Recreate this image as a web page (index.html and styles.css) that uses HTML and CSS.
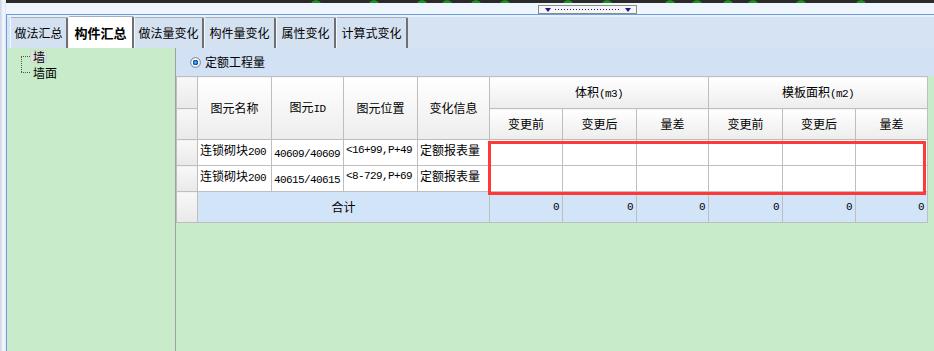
FILE: index.html
```html
<!DOCTYPE html>
<html lang="zh">
<head>
<meta charset="utf-8">
<title>构件汇总</title>
<link rel="stylesheet" href="styles.css">
</head>
<body>
<div class="app">
  <div class="edge"></div>
  <div class="main">
    <div class="topband"></div>
    <div class="splitter">
      <div class="grip"><span class="tri"></span><span class="dots"></span><span class="tri"></span></div>
    </div>
    <div class="frame">
      <div class="tabs">
        <div class="tab w1">做法汇总</div>
        <div class="tab active w2">构件汇总</div>
        <div class="tab w3">做法量变化</div>
        <div class="tab w4">构件量变化</div>
        <div class="tab w5">属性变化</div>
        <div class="tab w6">计算式变化</div>
      </div>
      <div class="content">
        <div class="left">
          <div class="tree">
            <div class="node sel"><span>墙</span></div>
            <div class="node"><span>墙面</span></div>
          </div>
        </div>
        <div class="right">
          <div class="radiobar"><span class="radio"></span><span>定额工程量</span></div>
          <div class="tablewrap">
            <table class="grid">
              <colgroup>
                <col class="c0"><col class="c74"><col class="c72"><col class="c74"><col class="c72">
                <col class="c73"><col class="c74"><col class="c72"><col class="c74"><col class="c73"><col class="c72">
              </colgroup>
              <thead>
                <tr class="h1">
                  <th class="rh"></th>
                  <th rowspan="2">图元名称</th>
                  <th rowspan="2">图元<span class="n">ID</span></th>
                  <th rowspan="2">图元位置</th>
                  <th rowspan="2">变化信息</th>
                  <th colspan="3">体积<span class="n">(m3)</span></th>
                  <th colspan="3">模板面积<span class="n">(m2)</span></th>
                </tr>
                <tr class="h2">
                  <th class="rh"></th>
                  <th>变更前</th><th>变更后</th><th>量差</th>
                  <th>变更前</th><th>变更后</th><th>量差</th>
                </tr>
              </thead>
              <tbody>
                <tr class="r">
                  <th class="rh"></th>
                  <td class="top">连锁砌块<span class="n">200</span></td>
                  <td class="mid n">40609/40609</td>
                  <td class="top n">&lt;16+99,P+49</td>
                  <td class="top">定额报表量</td>
                  <td></td><td></td><td></td><td></td><td></td><td></td>
                </tr>
                <tr class="r">
                  <th class="rh"></th>
                  <td class="top">连锁砌块<span class="n">200</span></td>
                  <td class="mid n">40615/40615</td>
                  <td class="top n">&lt;8-729,P+69</td>
                  <td class="top">定额报表量</td>
                  <td></td><td></td><td></td><td></td><td></td><td></td>
                </tr>
                <tr class="total">
                  <th class="rh"></th>
                  <td colspan="4" class="sum">合计</td>
                  <td class="num n">0</td><td class="num n">0</td><td class="num n">0</td>
                  <td class="num n">0</td><td class="num n">0</td><td class="num n">0</td>
                </tr>
              </tbody>
            </table>
            <div class="highlight"></div>
          </div>
        </div>
      </div>
    </div>
  </div>
</div>
</body>
</html>
```

FILE: styles.css
```css
html, body {
  margin: 0;
  padding: 0;
}
body {
  width: 934px;
  height: 351px;
  overflow: hidden;
  font-family: "Noto Sans CJK SC", "Liberation Sans", sans-serif;
  font-size: 12px;
  line-height: 14px;
  color: #000;
  background: #c8ecca;
}
.app {
  display: flex;
  height: 351px;
}
.edge {
  width: 6px;
  flex: none;
  background: linear-gradient(to right, #c8d3e3, #f6f9fd 55%, #dce6f3);
}
.main {
  flex: 1;
  min-width: 0;
  display: flex;
  flex-direction: column;
}
.topband {
  height: 3px;
  background-color: #2b2b2b;
  background-image:
    radial-gradient(5px 3px at 310px 3px, #1f8f1f 80%, transparent 100%),
    radial-gradient(5px 3px at 368px 3px, #1f8f1f 80%, transparent 100%),
    radial-gradient(5px 3px at 416px 3px, #1f8f1f 80%, transparent 100%),
    radial-gradient(5px 3px at 441px 3px, #1f8f1f 80%, transparent 100%),
    radial-gradient(5px 3px at 470px 3px, #1f8f1f 80%, transparent 100%),
    radial-gradient(5px 3px at 499px 3px, #1f8f1f 80%, transparent 100%),
    radial-gradient(5px 3px at 562px 3px, #1f8f1f 80%, transparent 100%),
    radial-gradient(5px 3px at 601px 3px, #1f8f1f 80%, transparent 100%),
    radial-gradient(5px 3px at 664px 3px, #1f8f1f 80%, transparent 100%),
    radial-gradient(5px 3px at 691px 3px, #1f8f1f 80%, transparent 100%),
    radial-gradient(5px 3px at 722px 3px, #1f8f1f 80%, transparent 100%),
    radial-gradient(5px 3px at 747px 3px, #1f8f1f 80%, transparent 100%),
    radial-gradient(5px 3px at 795px 3px, #1f8f1f 80%, transparent 100%),
    radial-gradient(5px 3px at 855px 3px, #1f8f1f 80%, transparent 100%);
}
.splitter {
  height: 11px;
  box-sizing: border-box;
  background: #eef5fd;
  padding: 2px 0 0 532px;
  display: flex;
  align-items: flex-start;
}
.grip {
  width: 99px;
  height: 9px;
  box-sizing: border-box;
  border: 1px solid #8c8c8c;
  background: #f6f6f6;
  display: flex;
  align-items: center;
  padding: 0 5px 0 6px;
  gap: 4px;
}
.tri {
  width: 0;
  height: 0;
  border-left: 3px solid transparent;
  border-right: 3px solid transparent;
  border-top: 4px solid #17178a;
}
.dots {
  flex: 1;
  height: 1px;
  background: repeating-linear-gradient(to right, #17178a 0 1px, transparent 1px 3px);
}
.frame {
  flex: 1;
  min-height: 0;
  display: flex;
  flex-direction: column;
  border-top: 1px solid #6c9ce2;
  border-left: 1px solid #6c9ce2;
}
.tabs {
  height: 33px;
  flex: none;
  box-sizing: border-box;
  background: linear-gradient(#e8f0fa 0 2px, #d6e3f3 2px);
  display: flex;
  align-items: flex-end;
  padding-left: 3px;
}
.tab {
  height: 31px;
  box-sizing: border-box;
  display: flex;
  align-items: center;
  justify-content: center;
  background: #d3e1f1;
  border-top: 1px solid #a4afbd;
  border-left: 1px solid #f4f8fc;
  border-right: 2px solid #707070;
  border-radius: 2px 2px 0 0;
  white-space: nowrap;
}
.tab.active {
  height: 32px;
  background: #ffffff;
  font-weight: bold;
  font-size: 13px;
}
.w1 { width: 58px; }
.w2 { width: 66px; }
.w3 { width: 70px; }
.w4 { width: 72px; }
.w5 { width: 60px; }
.w6 { width: 72px; }
.content {
  flex: 1;
  min-height: 0;
  display: flex;
}
.left {
  width: 168px;
  flex: none;
  background: #c8ecca;
  border-right: 1px solid #a0a0a0;
}
.tree {
  position: relative;
  margin: 0 0 0 14px;
}
.tree::before {
  content: "";
  position: absolute;
  left: 0;
  top: 8px;
  height: 16px;
  border-left: 1px dotted #555;
}
.node {
  display: flex;
  align-items: center;
  height: 16px;
  line-height: 13px;
}
.node::before {
  content: "";
  width: 9px;
  border-top: 1px dotted #555;
}
.node span {
  padding: 0 2px 0 3px;
  border-radius: 2px;
}
.node.sel span {
  background: #dde3dd;
  box-shadow: inset 0 0 0 1px #cdd5cd;
}
.right {
  flex: 1;
  min-width: 0;
  display: flex;
  flex-direction: column;
  background: #c8ecca;
}
.radiobar {
  height: 28px;
  flex: none;
  background: #d2e2f4;
  display: flex;
  align-items: center;
  padding-left: 14px;
  gap: 4px;
}
.radio {
  width: 11px;
  height: 11px;
  box-sizing: border-box;
  border-radius: 50%;
  border: 1px solid #8593a3;
  background: radial-gradient(circle, #5cc0f4 0, #0c72cc 1.8px, #0a3d86 2.6px, #ffffff 3px, #f2f5f8 3.6px, #c4ccd6 4.5px);
}
.tablewrap {
  position: relative;
  align-self: flex-start;
}
.grid {
  border-collapse: collapse;
  table-layout: fixed;
  width: 751px;
}
.c0 { width: 21px; }
.c72 { width: 72px; }
.c73 { width: 73px; }
.c74 { width: 74px; }
.grid th, .grid td {
  border: 1px solid #bebebe;
  padding: 0;
  white-space: nowrap;
  overflow: hidden;
}
.grid thead th {
  font-weight: normal;
  text-align: center;
  vertical-align: middle;
  background: linear-gradient(#ffffff, #ededed);
}
.grid th.rh {
  background: linear-gradient(#f8f8f8, #e9e9e9);
}
.h1 { height: 32px; }
.h2 { height: 31px; }
.r { height: 26px; }
.total { height: 31px; }
.grid td {
  background: #ffffff;
}
.grid td.top {
  vertical-align: top;
  padding: 3px 0 0 2px;
}
.grid td.mid {
  vertical-align: middle;
  padding: 2px 0 0 2px;
}
.total td {
  background: #d2e4f8;
}
.grid td.sum {
  text-align: center;
  vertical-align: middle;
  background: #d2e4f8;
}
.grid td.num {
  text-align: right;
  vertical-align: middle;
  padding-right: 3px;
}
.n {
  font-family: "Liberation Mono", monospace;
  font-size: 11px;
  letter-spacing: -0.6px;
}
.highlight {
  position: absolute;
  left: 312px;
  top: 65px;
  width: 438px;
  height: 54px;
  box-sizing: border-box;
  border: 3px solid #ff3838;
}
```
